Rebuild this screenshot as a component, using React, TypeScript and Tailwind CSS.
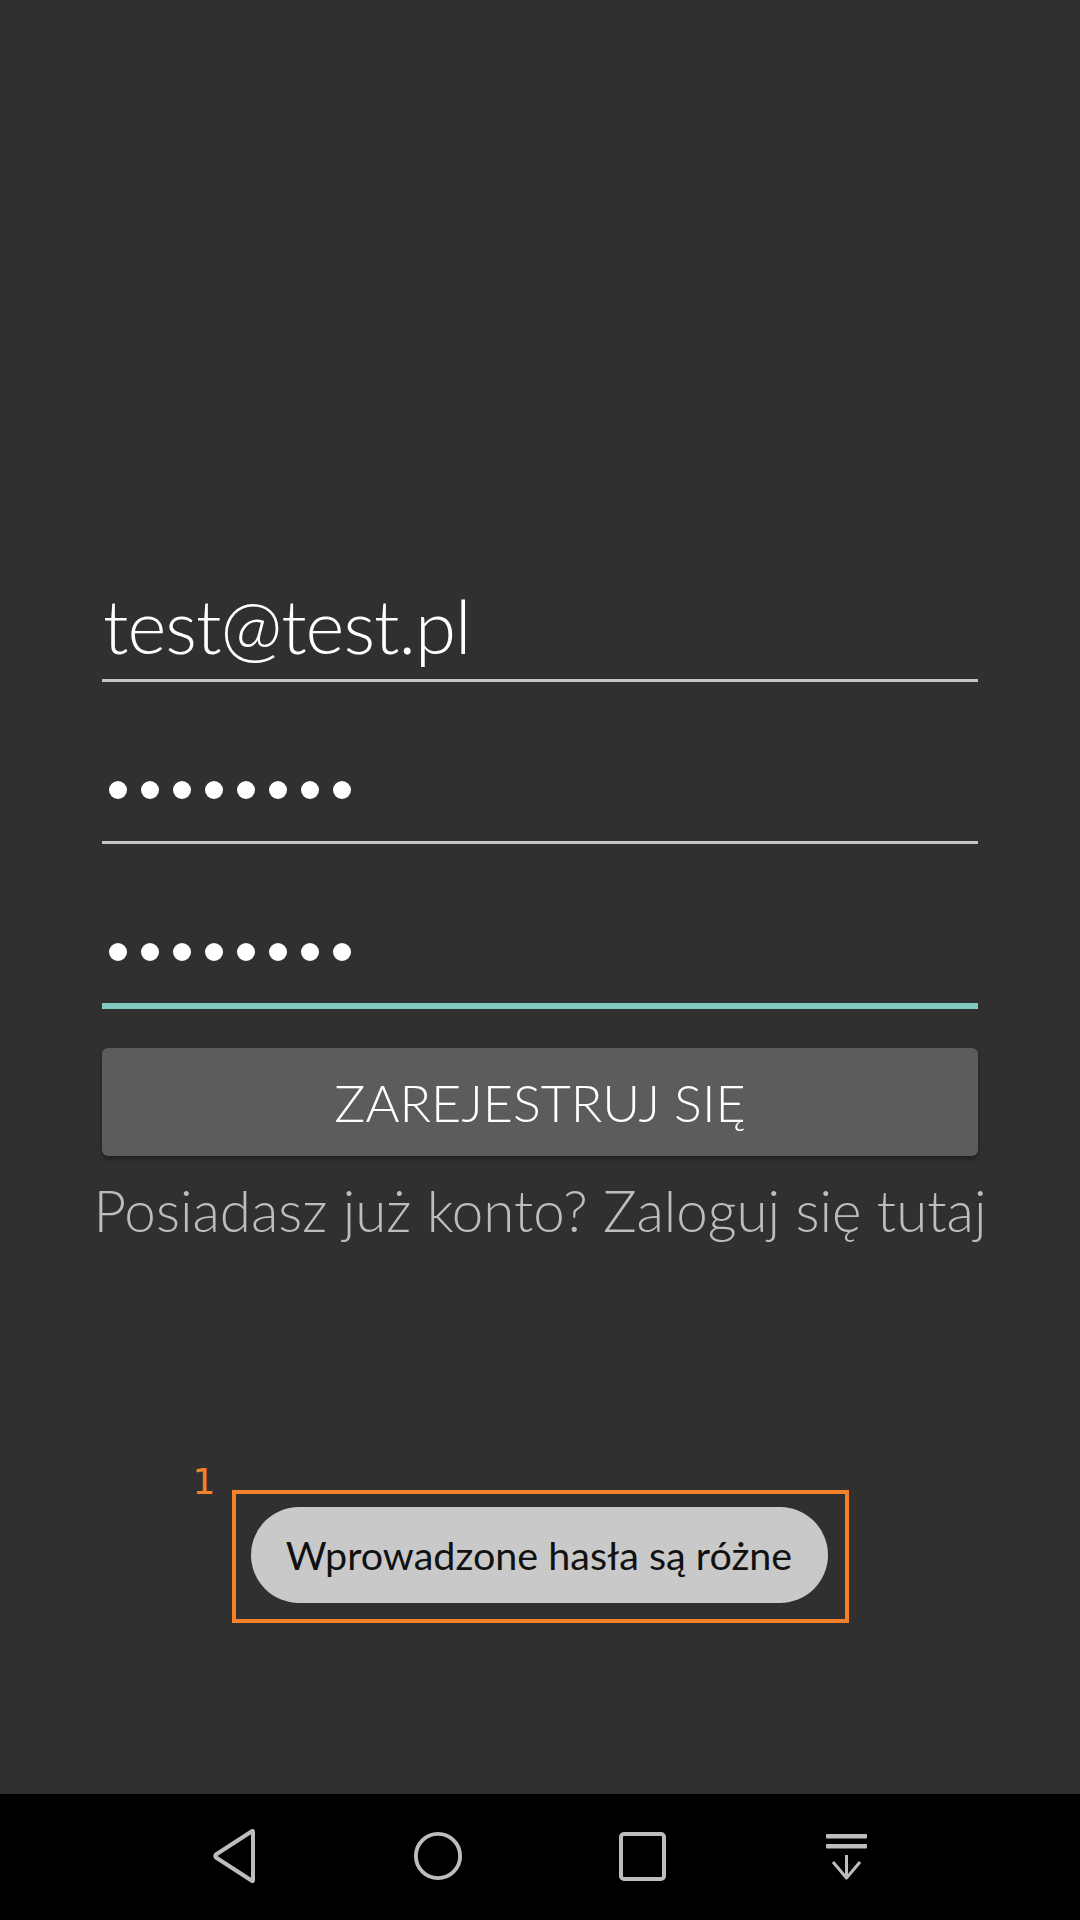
export default function App() {
  const dots = Array.from({ length: 8 });

  return (
    <div
      className="w-[1080px] h-[1920px] bg-[#303030] flex flex-col overflow-hidden"
      style={{ fontFamily: "Lato, 'Open Sans', sans-serif" }}
    >
      {/* Form */}
      <div className="flex-1 flex flex-col px-[102px] pt-[549px]">
        {/* Email */}
        <div className="h-[133px] flex items-end border-b-[3px] border-[#c6c6c6] pb-[17px]">
          <span className="text-[74.5px] leading-none font-light text-white pl-[1px] tracking-[-1px]">
            test@test.pl
          </span>
        </div>

        {/* Password */}
        <div className="mt-[29px] h-[133px] flex items-end border-b-[3px] border-[#c6c6c6] pb-[42px] pl-[7px]">
          <div className="flex gap-[14px]">
            {dots.map((_, i) => (
              <span key={i} className="w-[18px] h-[18px] rounded-full bg-white" />
            ))}
          </div>
        </div>

        {/* Confirm password (focused) */}
        <div className="mt-[29px] h-[136px] flex items-end border-b-[6px] border-[#82c9c1] pb-[42px] pl-[7px]">
          <div className="flex gap-[14px]">
            {dots.map((_, i) => (
              <span key={i} className="w-[18px] h-[18px] rounded-full bg-white" />
            ))}
          </div>
        </div>

        {/* Register button */}
        <button className="mt-[39px] h-[108px] w-full rounded-[6px] bg-[#5c5c5e] shadow-[0_3px_4px_rgba(0,0,0,0.35)] flex items-center justify-center">
          <span className="text-[52px] leading-none font-light text-white">
            ZAREJESTRUJ SIĘ
          </span>
        </button>

        {/* Login link */}
        <div className="mt-[26px] -mx-[20px] flex justify-center">
          <span className="text-[56.5px] leading-none font-light text-[#bdbdbd] whitespace-nowrap">
            Posiadasz już konto? Zaloguj się tutaj
          </span>
        </div>

        {/* Toast with annotation box */}
        <div className="mt-[251px] flex justify-center">
          <div className="relative border-4 border-[#f5822a] pl-[15px] pr-[17px] pt-[13px] pb-[16px]">
            <span
              className="absolute -left-[43px] -top-[30px] text-[36px] leading-none text-[#f5822a]"
              style={{ fontFamily: "'DejaVu Sans', sans-serif" }}
            >
              1
            </span>
            <div className="h-[96px] w-[577px] rounded-full bg-[#c9c9c9] flex items-center justify-center">
              <span className="text-[39.5px] leading-none text-[#111111] whitespace-nowrap">
                Wprowadzone hasła są różne
              </span>
            </div>
          </div>
        </div>
      </div>

      {/* Navigation bar */}
      <div className="h-[126px] bg-black flex items-center justify-center gap-[154px] pb-[2px]">
        <div className="w-[50px] flex justify-center">
          <svg width="45" height="54" viewBox="0 0 45 54" fill="none">
            <path
              d="M41 3 L41 51 Q41 53 39.5 51.5 L4 28.5 Q2.5 27 4 25.5 L39.5 2.5 Q41 1 41 3 Z"
              stroke="#bdbdbd"
              strokeWidth="4"
              strokeLinejoin="round"
            />
          </svg>
        </div>
        <div className="w-[50px] flex justify-center">
          <svg width="52" height="52" viewBox="0 0 52 52" fill="none">
            <circle cx="26" cy="26" r="23" stroke="#bdbdbd" strokeWidth="4" />
          </svg>
        </div>
        <div className="w-[50px] flex justify-center">
          <svg width="47" height="49" viewBox="0 0 47 49" fill="none">
            <rect x="2" y="2" width="43" height="45" rx="3" stroke="#bdbdbd" strokeWidth="4" />
          </svg>
        </div>
        <div className="w-[50px] flex justify-center">
          <svg width="45" height="49" viewBox="0 0 45 49" fill="none">
            <rect x="2" y="2" width="41" height="4.5" rx="1" fill="#bdbdbd" />
            <rect x="2" y="12" width="41" height="4.5" rx="1" fill="#bdbdbd" />
            <path d="M22.5 23 V46" stroke="#bdbdbd" strokeWidth="3" />
            <path d="M9 30 L22.5 46 L36 30" stroke="#bdbdbd" strokeWidth="3" strokeLinejoin="round" />
          </svg>
        </div>
      </div>
    </div>
  );
}
